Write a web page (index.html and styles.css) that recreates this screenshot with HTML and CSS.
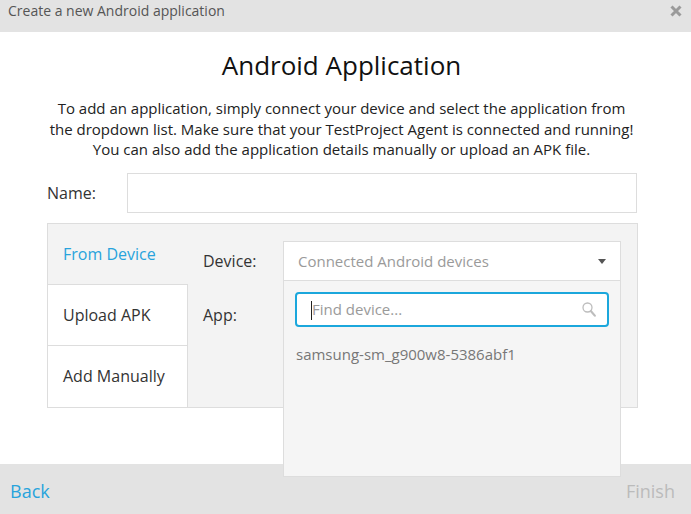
FILE: index.html
```html
<!DOCTYPE html>
<html>
<head>
<meta charset="utf-8">
<link rel="stylesheet" href="styles.css">
</head>
<body>
<div class="dialog">
  <div class="header">
    <span class="header-title">Create a new Android application</span>
    <svg class="close" width="12" height="12" viewBox="0 0 12 12"><path d="M1.5 1.5 L10.5 10.5 M10.5 1.5 L1.5 10.5" stroke="#9a9a9a" stroke-width="3" stroke-linecap="butt"/></svg>
  </div>
  <div class="content">
    <h1 class="title">Android Application</h1>
    <p class="intro">To add an application, simply connect your device and select the application from<br>the dropdown list. Make sure that your TestProject Agent is connected and running!<br>You can also add the application details manually or upload an APK file.</p>
    <div class="name-row">
      <label class="name-label">Name:</label>
      <div class="name-input"></div>
    </div>
    <div class="panel">
      <div class="tabs">
        <div class="tab active">From Device</div>
        <div class="tab">Upload APK</div>
        <div class="tab">Add Manually</div>
      </div>
      <div class="form">
        <div class="row">
          <span class="row-label">Device:</span>
          <div class="select">
            <span class="select-text">Connected Android devices</span>
            <span class="caret"></span>
            <div class="menu">
              <div class="search">
                <span class="cursor"></span>
                <span class="search-ph">Find device...</span>
                <svg class="search-icon" width="14" height="15" viewBox="0 0 14 15"><circle cx="5.5" cy="5.5" r="4.5" fill="none" stroke="#bdbdbd" stroke-width="1.3"/><path d="M8.8 9 L12.8 13.6" stroke="#bdbdbd" stroke-width="2.2" stroke-linecap="round"/></svg>
              </div>
              <div class="menu-item">samsung-sm_g900w8-5386abf1</div>
            </div>
          </div>
        </div>
        <div class="row row-app">
          <span class="row-label">App:</span>
        </div>
      </div>
    </div>
  </div>
  <div class="footer">
    <span class="back">Back</span>
    <span class="finish">Finish</span>
  </div>
</div>
</body>
</html>
```

FILE: styles.css
```css
* { box-sizing: border-box; }
html, body { margin: 0; padding: 0; background: #fff; }
body { font-family: "Open Sans", "Noto Sans", sans-serif; }

.dialog {
  width: 691px;
  height: 514px;
  display: flex;
  flex-direction: column;
  overflow: hidden;
}

.header {
  height: 32px;
  background: #e3e3e3;
  display: flex;
  align-items: center;
  justify-content: space-between;
  padding: 0 9px 0 8px;
  flex-shrink: 0;
}
.header-title {
  font-size: 14px;
  color: #555;
  margin-top: -11px;
}
.close { margin-top: -10px; }

.content {
  flex: 1;
  position: relative;
}

.title {
  margin: 16px 0 0;
  padding-right: 8px;
  text-align: center;
  font-size: 26px;
  line-height: 34px;
  font-weight: 400;
  color: #111;
}

.intro {
  margin: 16px 0 0;
  padding-right: 8px;
  text-align: center;
  font-size: 15px;
  line-height: 20.5px;
  color: #222;
}

.name-row {
  margin: 13px 0 0 47px;
  display: flex;
  align-items: center;
}
.name-label {
  width: 80px;
  font-size: 16px;
  color: #333;
}
.name-input {
  width: 510px;
  height: 40px;
  border: 1px solid #ddd;
  background: #fff;
}

.panel {
  margin: 10px 0 0 47px;
  width: 591px;
  height: 185px;
  background: #f3f3f3;
  border: 1px solid #ddd;
  display: flex;
}

.tabs {
  width: 140px;
  display: flex;
  flex-direction: column;
}
.tab {
  height: 61px;
  padding-left: 15px;
  display: flex;
  align-items: center;
  font-size: 16px;
  color: #333;
  background: #fff;
  border-top: 1px solid #ddd;
  border-right: 1px solid #ddd;
}
.tab.active {
  height: 60px;
  background: transparent;
  border: none;
  color: #28a3dc;
  padding-top: 1px;
}
.tab:last-child { height: 62px; }

.form {
  flex: 1;
  padding: 17px 0 0 15px;
}
.row {
  display: flex;
  align-items: center;
  height: 40px;
}
.row-label {
  width: 80px;
  font-size: 16px;
  color: #333;
  padding-top: 1px;
}
.row-app { margin-top: 14px; }

.select {
  position: relative;
  width: 338px;
  height: 40px;
  background: #fff;
  border: 1px solid #ddd;
  display: flex;
  align-items: center;
  padding-left: 14px;
}
.select-text {
  font-size: 15px;
  color: #9a9a9a;
}
.caret {
  position: absolute;
  right: 14px;
  top: 17px;
  width: 0;
  height: 0;
  border-left: 4px solid transparent;
  border-right: 4px solid transparent;
  border-top: 5px solid #555;
}

.menu {
  position: absolute;
  left: -1px;
  top: 38px;
  width: 338px;
  height: 197px;
  background: #f5f5f5;
  border: 1px solid #ddd;
  padding: 11px 11px 0 11px;
  z-index: 5;
}
.search {
  position: relative;
  height: 35px;
  background: #fff;
  border: 2px solid #1ba7dc;
  border-radius: 4px;
  display: flex;
  align-items: center;
  padding-left: 14px;
}
.cursor {
  position: absolute;
  left: 14px;
  top: 7px;
  width: 1px;
  height: 19px;
  background: #222;
}
.search-ph {
  font-size: 15px;
  color: #9a9a9a;
  margin-left: 1px;
}
.search-icon {
  position: absolute;
  right: 11px;
  top: 8px;
}
.menu-item {
  margin-top: 17px;
  padding-left: 1px;
  font-size: 15px;
  color: #777;
}

.footer {
  height: 50px;
  background: #e3e3e3;
  display: flex;
  align-items: center;
  justify-content: space-between;
  padding: 0 16px 0 10px;
  flex-shrink: 0;
}
.back {
  font-size: 18px;
  color: #28a3dc;
  margin-top: 4px;
}
.finish {
  font-size: 18px;
  color: #bbb;
  margin-top: 4px;
}
```
